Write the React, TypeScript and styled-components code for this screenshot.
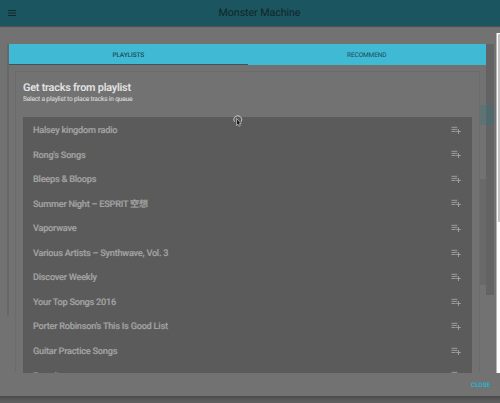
import React from "react";
import styled, { createGlobalStyle } from "styled-components";

const GlobalStyle = createGlobalStyle`
  * { box-sizing: border-box; }
  body { margin: 0; overflow: hidden; background: #727272; }
  body, button { font-family: Roboto, "Noto Sans CJK SC", sans-serif; text-rendering: geometricPrecision; }
  button { border: 0; background: none; padding: 0; }
`;

const Page = styled.div`
  position: relative;
  display: flex;
  flex-direction: column;
  width: 500px;
  height: 403px;
  overflow: hidden;
  background: #727272;
`;

const AppBar = styled.header`
  display: grid;
  grid-template-columns: 24px 1fr 5px;
  align-items: center;
  flex: none;
  height: 26px;
  background: #1b5560;
  box-shadow: 0 1px 1px rgba(0, 0, 0, 0.28);
  z-index: 1;
`;

const MenuButton = styled.button`
  display: flex;
  padding-left: 8px;
`;

const AppTitle = styled.h1`
  margin: 0;
  text-align: center;
  font-size: 10.7px;
  letter-spacing: -0.08px;
  line-height: 24px;
  font-weight: 400;
  color: #10262a;
`;

const Stage = styled.div`
  display: flex;
  flex: none;
  height: 347px;
`;

const Gutter = styled.div`
  width: 7px;
  flex: none;
`;

const DialogEdge = styled.div`
  width: 2px;
  height: 272px;
  margin-top: 18px;
  flex: none;
  background: #676767;
`;

const Dialog = styled.main`
  width: 477px;
  margin-top: 18px;
  flex: none;
  display: flex;
  flex-direction: column;
  min-height: 0;
`;

const Tabs = styled.nav`
  display: flex;
  height: 21px;
  flex: none;
  background: #40b9d4;
`;

const Tab = styled.button<{ $active?: boolean }>`
  flex: 1;
  padding-top: 1px;
  font-size: 6.5px;
  letter-spacing: -0.12px;
  font-weight: ${(p) => (p.$active ? 500 : 400)};
  color: #1c4c56;
  border-bottom: 1px solid ${(p) => (p.$active ? "#3b565c" : "#40b9d4")};
`;

const DialogBody = styled.div`
  display: flex;
  flex: 1;
  min-height: 0;
`;

const Card = styled.section`
  width: 465px;
  margin: 6px 0 0 6px;
  padding: 10px 7px 0;
  border: 1px solid #6b6b6b;
  border-bottom: 0;
  flex: none;
  display: flex;
  flex-direction: column;
`;

const Heading = styled.h2`
  margin: 0;
  font-size: 10.9px;
  letter-spacing: -0.24px;
  line-height: 11px;
  font-weight: 600;
  color: #e2e2e2;
`;

const Subheading = styled.p`
  margin: 2px 0 0;
  font-size: 6.6px;
  letter-spacing: -0.18px;
  line-height: 8px;
  color: #d6d6d6;
  -webkit-text-stroke: 0.12px #d6d6d6;
`;

const List = styled.ul`
  list-style: none;
  margin: 14px 0 0;
  padding: 0.5px 0 0;
  flex: 1;
  min-height: 0;
  overflow: hidden;
  background: #5b5b5b;
`;

const Row = styled.li`
  display: flex;
  align-items: center;
  justify-content: space-between;
  height: 24.57px;
  padding: 0 11px 0 10px;
`;

const TrackName = styled.span`
  padding-top: 2.4px;
  font-size: 9.2px;
  letter-spacing: -0.24px;
  line-height: 12px;
  font-weight: 500;
  color: #a2a2a2;
  -webkit-text-stroke: 0.18px #a2a2a2;
  white-space: nowrap;
`;

const Track = styled.div`
  width: 6px;
  flex: none;
  display: flex;
  flex-direction: column;
`;

const Segment = styled.div<{ $height: number; $color: string }>`
  height: ${(p) => p.$height}px;
  background: ${(p) => p.$color};
  flex: none;
`;

const SidePanel = styled.aside`
  width: 8px;
  margin-top: 18px;
  flex: none;
`;

const Scrollbar = styled.div`
  width: 4px;
  height: 340px;
  margin: 7px 0 0 2px;
  border-left: 1px solid #b5b5b5;
  background: #fbfbfb;
  display: flex;
  justify-content: flex-end;
`;

const Thumb = styled.div`
  width: 2px;
  height: 188px;
  margin-top: 1px;
  border-radius: 1px 0 0 1px;
  background: #c2c2c2;
`;

const Footer = styled.footer`
  display: flex;
  align-items: center;
  justify-content: flex-end;
  flex: none;
  height: 23px;
  padding-right: 10px;
  background: #727272;
  z-index: 1;
`;

const CloseButton = styled.button`
  padding-top: 1px;
  font-size: 6.5px;
  letter-spacing: -0.15px;
  font-weight: 700;
  color: #29b1cc;
`;

const BottomShade = styled.div`
  flex: 1;
  background: linear-gradient(#484848, #575757 3px, #606060);
`;

const Pointer = styled.svg`
  position: absolute;
  left: 231px;
  top: 113px;
`;

const MenuIcon = () => (
  <svg width="9" height="8" viewBox="0 0 9 8">
    <path d="M0 1.5h8M0 4h8M0 6.5h8" stroke="#102a30" strokeWidth="1.2" />
  </svg>
);

const QueueIcon = () => (
  <svg width="10" height="8" viewBox="0 0 10 8">
    <path d="M0.5 1.3h5.8M0.5 3.4h5.8M0.5 5.5h4M5.2 5.5h4.6M7.5 3.2v4.8" stroke="#a0a0a0" strokeWidth="0.95" fill="none" />
  </svg>
);

const playlists = [
  "Halsey kingdom radio",
  "Rong's Songs",
  "Bleeps & Bloops",
  "Summer Night – ESPRIT 空想",
  "Vaporwave",
  "Various Artists – Synthwave, Vol. 3",
  "Discover Weekly",
  "Your Top Songs 2016",
  "Porter Robinson's This Is Good List",
  "Guitar Practice Songs",
  "Favorites",
];

export default function App() {
  return (
    <>
      <GlobalStyle />
      <Page>
        <AppBar>
          <MenuButton aria-label="Menu"><MenuIcon /></MenuButton>
          <AppTitle>Monster Machine</AppTitle>
        </AppBar>
        <Stage>
          <Gutter />
          <DialogEdge />
          <Dialog>
            <Tabs>
              <Tab $active>PLAYLISTS</Tab>
              <Tab>RECOMMEND</Tab>
            </Tabs>
            <DialogBody>
              <Card>
                <Heading>Get tracks from playlist</Heading>
                <Subheading>Select a playlist to place tracks in queue</Subheading>
                <List>
                  {playlists.map((name) => (
                    <Row key={name}>
                      <TrackName>{name}</TrackName>
                      <QueueIcon />
                    </Row>
                  ))}
                </List>
              </Card>
              <Track>
                <Segment $height={40} $color="#727272" />
                <Segment $height={20} $color="#5f7375" />
                <Segment $height={54} $color="#727272" />
                <Segment $height={106} $color="#696969" />
                <Segment $height={88} $color="#727272" />
              </Track>
            </DialogBody>
          </Dialog>
          <SidePanel>
            <Segment $height={61} $color="#636363" />
            <Segment $height={20} $color="#51696d" />
            <Segment $height={170} $color="#636363" />
          </SidePanel>
          <Scrollbar><Thumb /></Scrollbar>
        </Stage>
        <Footer><CloseButton>CLOSE</CloseButton></Footer>
        <BottomShade />
        <Pointer width="13" height="15" viewBox="0 0 13 15">
          <path d="M3.4 8.8A4 4 0 1 1 10.2 8.8" fill="none" stroke="#c4c4c4" strokeWidth="1" />
          <path d="M5.5 5.5v7l1.5-1.3 1 2 1.3-.6-.9-2h1.8z" fill="#1c1c1c" stroke="#d0d0d0" strokeWidth="0.7" />
        </Pointer>
      </Page>
    </>
  );
}
